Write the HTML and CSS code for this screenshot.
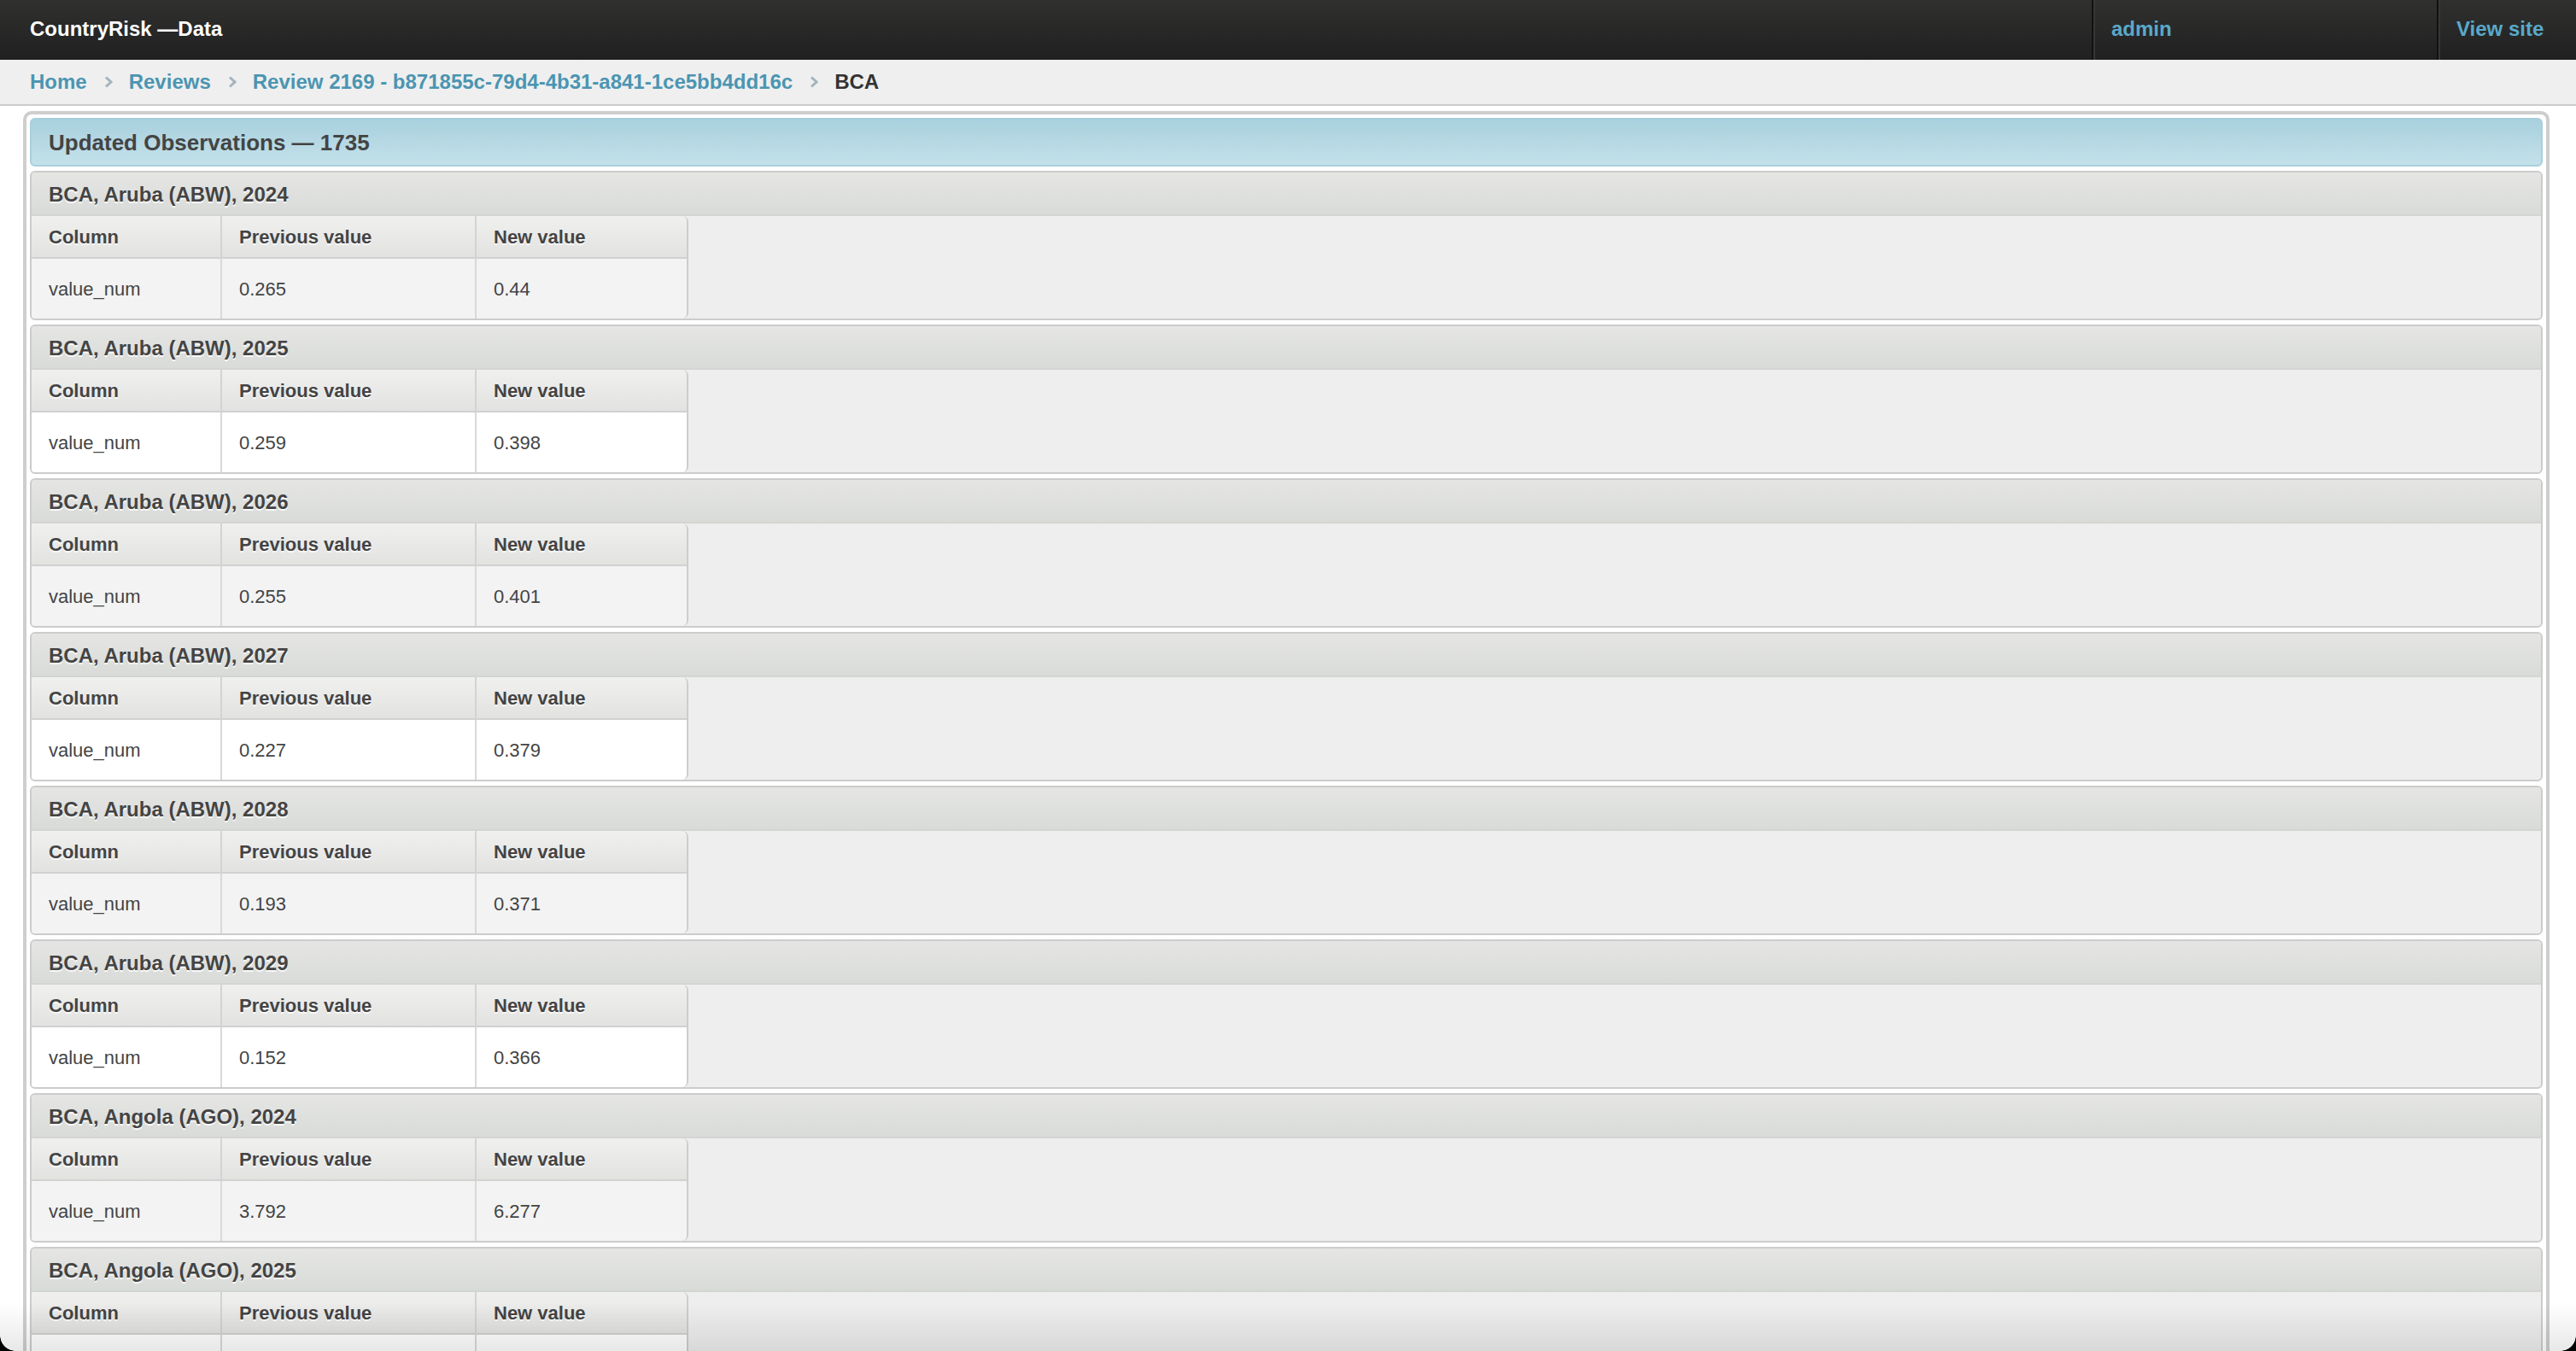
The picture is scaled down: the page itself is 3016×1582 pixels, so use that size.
FILE: index.html
```html
<!DOCTYPE html>
<html lang="en">
<head>
<meta charset="utf-8">
<title>Review 2169 | CountryRisk —Data</title>
<link rel="stylesheet" href="styles.css">
</head>
<body>
<header class="topbar">
  <div class="brand">CountryRisk —Data</div>
  <ul class="user-tools">
    <li class="tool tool-user"><a href="#">admin</a></li>
    <li class="tool tool-site"><a href="#">View site</a></li>
  </ul>
</header>
<nav class="breadcrumbs">
  <a href="#">Home</a>
  <svg class="sep" viewBox="0 0 10 14" width="10" height="14"><polyline points="2,1.5 8,7 2,12.5" fill="none" stroke="#a3b4bc" stroke-width="3"/></svg>
  <a href="#">Reviews</a>
  <svg class="sep" viewBox="0 0 10 14" width="10" height="14"><polyline points="2,1.5 8,7 2,12.5" fill="none" stroke="#a3b4bc" stroke-width="3"/></svg>
  <a href="#">Review 2169 - b871855c-79d4-4b31-a841-1ce5bb4dd16c</a>
  <svg class="sep" viewBox="0 0 10 14" width="10" height="14"><polyline points="2,1.5 8,7 2,12.5" fill="none" stroke="#a3b4bc" stroke-width="3"/></svg>
  <span class="current">BCA</span>
</nav>
<main class="content">
  <section class="group">
    <h2 class="group-title">Updated Observations — 1735</h2>

    <div class="module">
      <h3 class="module-title">BCA, Aruba (ABW), 2024</h3>
      <div class="tbl"><table>
        <thead><tr><th class="c1">Column</th><th class="c2">Previous value</th><th class="c3">New value</th></tr></thead>
        <tbody><tr class="row1"><td class="c1">value_num</td><td class="c2">0.265</td><td class="c3">0.44</td></tr></tbody>
      </table></div>
    </div>

    <div class="module">
      <h3 class="module-title">BCA, Aruba (ABW), 2025</h3>
      <div class="tbl"><table>
        <thead><tr><th class="c1">Column</th><th class="c2">Previous value</th><th class="c3">New value</th></tr></thead>
        <tbody><tr class="row2"><td class="c1">value_num</td><td class="c2">0.259</td><td class="c3">0.398</td></tr></tbody>
      </table></div>
    </div>

    <div class="module">
      <h3 class="module-title">BCA, Aruba (ABW), 2026</h3>
      <div class="tbl"><table>
        <thead><tr><th class="c1">Column</th><th class="c2">Previous value</th><th class="c3">New value</th></tr></thead>
        <tbody><tr class="row1"><td class="c1">value_num</td><td class="c2">0.255</td><td class="c3">0.401</td></tr></tbody>
      </table></div>
    </div>

    <div class="module">
      <h3 class="module-title">BCA, Aruba (ABW), 2027</h3>
      <div class="tbl"><table>
        <thead><tr><th class="c1">Column</th><th class="c2">Previous value</th><th class="c3">New value</th></tr></thead>
        <tbody><tr class="row2"><td class="c1">value_num</td><td class="c2">0.227</td><td class="c3">0.379</td></tr></tbody>
      </table></div>
    </div>

    <div class="module">
      <h3 class="module-title">BCA, Aruba (ABW), 2028</h3>
      <div class="tbl"><table>
        <thead><tr><th class="c1">Column</th><th class="c2">Previous value</th><th class="c3">New value</th></tr></thead>
        <tbody><tr class="row1"><td class="c1">value_num</td><td class="c2">0.193</td><td class="c3">0.371</td></tr></tbody>
      </table></div>
    </div>

    <div class="module">
      <h3 class="module-title">BCA, Aruba (ABW), 2029</h3>
      <div class="tbl"><table>
        <thead><tr><th class="c1">Column</th><th class="c2">Previous value</th><th class="c3">New value</th></tr></thead>
        <tbody><tr class="row2"><td class="c1">value_num</td><td class="c2">0.152</td><td class="c3">0.366</td></tr></tbody>
      </table></div>
    </div>

    <div class="module">
      <h3 class="module-title">BCA, Angola (AGO), 2024</h3>
      <div class="tbl"><table>
        <thead><tr><th class="c1">Column</th><th class="c2">Previous value</th><th class="c3">New value</th></tr></thead>
        <tbody><tr class="row1"><td class="c1">value_num</td><td class="c2">3.792</td><td class="c3">6.277</td></tr></tbody>
      </table></div>
    </div>

    <div class="module">
      <h3 class="module-title">BCA, Angola (AGO), 2025</h3>
      <div class="tbl"><table>
        <thead><tr><th class="c1">Column</th><th class="c2">Previous value</th><th class="c3">New value</th></tr></thead>
        <tbody><tr class="row2"><td class="c1">&nbsp;</td><td class="c2">&nbsp;</td><td class="c3">&nbsp;</td></tr></tbody>
      </table></div>
    </div>
  </section>
</main>
<div class="screen-fade"></div>
<div class="corner corner-left"></div>
<div class="corner corner-right"></div>
</body>
</html>
```

FILE: styles.css
```css
html {
  overflow: hidden;
}

body {
  margin: 0;
  font-family: "Liberation Sans", Arial, Helvetica, sans-serif;
  background: #ffffff;
  color: #444444;
}

a {
  text-decoration: none;
}

/* ---------- top bar ---------- */
.topbar {
  height: 70px;
  display: flex;
  background: linear-gradient(#30312f, #1f201f);
}

.brand {
  flex: 1;
  padding-left: 35px;
  line-height: 68px;
  font-size: 24px;
  font-weight: bold;
  color: #ffffff;
}

.user-tools {
  display: flex;
  margin: 0;
  padding: 0;
  list-style: none;
}

.tool {
  box-sizing: border-box;
  padding-left: 21px;
  line-height: 68px;
  font-size: 24px;
  font-weight: bold;
  border-left: 2px solid #111211;
  box-shadow: inset 2px 0 0 #363735;
}

.tool a {
  color: #5aa9cb;
}

.tool-user {
  width: 404px;
}

.tool-site {
  width: 163px;
}

/* ---------- breadcrumbs ---------- */
.breadcrumbs {
  height: 52px;
  display: flex;
  align-items: center;
  padding-left: 35px;
  background: #efefef;
  border-bottom: 2px solid #cccccc;
  font-size: 24px;
  font-weight: bold;
}

.breadcrumbs a {
  color: #4b95b2;
}

.breadcrumbs .sep {
  margin: 0 19px 0 20px;
}

.breadcrumbs .current {
  color: #333333;
}

/* ---------- content ---------- */
.content {
  padding: 6px 31px 0 27px;
}

.group {
  border: 4px solid #cdcecd;
  border-radius: 10px;
  padding: 4px;
}

.group-title {
  margin: 0;
  height: 57px;
  box-sizing: border-box;
  padding-left: 20px;
  line-height: 54px;
  font-size: 26px;
  font-weight: bold;
  color: #444444;
  border: 2px solid #a9cfdc;
  border-radius: 6px;
  background: linear-gradient(#a8d0de, #c4e1ea);
}

.module {
  margin-top: 5px;
  border: 2px solid #cbcccb;
  border-radius: 6px;
  background: #eeeeee;
  overflow: hidden;
}

.module-title {
  margin: 0;
  height: 51px;
  box-sizing: border-box;
  padding-left: 20px;
  line-height: 51px;
  font-size: 24px;
  font-weight: bold;
  color: #444444;
  text-shadow: 0 2px 0 rgba(255, 255, 255, 0.85);
  border-bottom: 2px solid #d3d5d2;
  background: linear-gradient(#e5e6e4, #d9dbd8);
}

.tbl {
  width: 769px;
  box-sizing: border-box;
  border-right: 2px solid #cdcdcd;
  border-radius: 0 7px 7px 0;
  overflow: hidden;
}

.tbl table {
  width: 767px;
  border-collapse: separate;
  border-spacing: 0;
  table-layout: fixed;
}

.tbl th,
.tbl td {
  box-sizing: border-box;
  padding: 0 0 0 20px;
  text-align: left;
  vertical-align: middle;
  font-size: 22px;
  color: #444444;
}

.tbl th {
  height: 50px;
  padding-top: 2px;
  font-weight: bold;
  text-shadow: 0 2px 0 rgba(255, 255, 255, 0.8);
  border-bottom: 2px solid #d1d1d1;
  background: linear-gradient(#f0f0ef, #e2e3e1);
}

.tbl td {
  height: 70px;
  padding-top: 2px;
  font-weight: normal;
}

.tbl .c1 {
  width: 221px;
}

.tbl .c2 {
  width: 298px;
  border-left: 2px solid #d9d9d9;
}

.tbl .c3 {
  width: 248px;
  border-left: 2px solid #d9d9d9;
}

.tbl th.c2,
.tbl th.c3 {
  border-left-color: #d3d3d3;
}

.row1 td {
  background: #f3f3f3;
}

.row2 td {
  background: #ffffff;
}

/* ---------- screenshot edge overlays ---------- */
.screen-fade {
  position: fixed;
  left: 0;
  right: 0;
  bottom: 0;
  height: 56px;
  background: linear-gradient(rgba(0, 0, 0, 0), rgba(0, 0, 0, 0.09));
  pointer-events: none;
}

.corner {
  position: fixed;
  bottom: 0;
  width: 18px;
  height: 18px;
  pointer-events: none;
}

.corner-left {
  left: 0;
  background: radial-gradient(circle at 100% 0, transparent 17.5px, #000000 18px);
}

.corner-right {
  right: 0;
  background: radial-gradient(circle at 0 0, transparent 17.5px, #000000 18px);
}
```
